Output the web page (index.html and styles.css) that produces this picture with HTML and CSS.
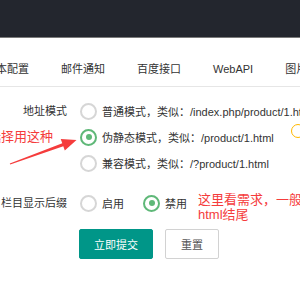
FILE: index.html
```html
<html>
<head>
	<title>系统配置</title>
	<link rel="stylesheet" href="styles.css">
</head>
<body>
	<div class="topbar"></div>
	<div class="tabs">
		<span class="tab">基本配置</span>
		<span class="tab">邮件通知</span>
		<span class="tab">百度接口</span>
		<span class="tab">WebAPI</span>
		<span class="tab">图片设置</span>
	</div>
	<form class="form">
		<div class="item">
			<label class="label">地址模式</label>
			<div class="options">
				<div class="radio"><i class="ring"></i><span>普通模式，类似：/index.php/product/1.html</span></div>
				<div class="radio checked"><i class="ring"></i><span>伪静态模式，类似：/product/1.html</span></div>
				<div class="radio"><i class="ring"></i><span>兼容模式，类似：/?product/1.html</span></div>
			</div>
		</div>
		<div class="item suffix">
			<label class="label">栏目显示后缀</label>
			<div class="options inline">
				<div class="radio"><i class="ring"></i><span>启用</span></div>
				<div class="radio checked"><i class="ring"></i><span>禁用</span></div>
			</div>
		</div>
		<div class="buttons">
			<button type="button" class="btn">立即提交</button>
			<button type="reset" class="btn btn-primary">重置</button>
		</div>
	</form>

	<div class="note note-left">选择用这种</div>
	<div class="note note-right">这里看需求，一般<br>html结尾</div>
	<svg class="arrow" width="90" height="40" viewBox="0 130 90 40">
		<polygon points="10.2,164.6 63.3,146.3 64.8,150.6 76.5,140 60.7,139 62.3,143.3 9.8,163.4" fill="#f53c3c"/>
	</svg>
	<i class="tip"></i>
</body>
</html>
```

FILE: styles.css
```css
body {
	margin: 0;
	overflow: hidden;
	background-color: white;
	font-family: "Liberation Sans", "Noto Sans CJK SC", sans-serif;
	font-size: 11px;
	color: #333;
}

.topbar {
	height: 37px;
	background-color: #23262e;
	border-bottom: 1px solid #7a7a7a;
}

.tabs {
	display: flex;
	margin-top: 14px;
	margin-left: -31px;
	height: 34px;
	border-bottom: 1px solid #e6e6e6;
	white-space: nowrap;
}

.tab {
	padding: 0 16px;
	line-height: 34px;
	font-size: 11px;
	color: #333;
}

.form {
	margin: 11px 0 0 0;
}

.item {
	display: flex;
}

.item.suffix {
	margin-top: 14px;
}

.label {
	width: 67px;
	flex-shrink: 0;
	text-align: right;
	line-height: 26px;
	white-space: nowrap;
	margin-right: 13px;
}

.options {
	display: flex;
	flex-direction: column;
}

.options.inline {
	flex-direction: row;
}

.radio {
	display: flex;
	align-items: center;
	height: 26px;
	white-space: nowrap;
}

.options.inline .radio {
	margin-right: 19px;
}

.ring {
	box-sizing: border-box;
	width: 17px;
	height: 17px;
	border: 2px solid #d6d6d6;
	border-radius: 50%;
	margin-right: 5px;
	display: flex;
	align-items: center;
	justify-content: center;
}

.radio.checked .ring {
	border-color: #5fb878;
}

.radio.checked .ring:after {
	content: "";
	width: 6px;
	height: 6px;
	border-radius: 50%;
	background-color: #5fb878;
}

.buttons {
	display: flex;
	gap: 12px;
	margin: 13px 0 0 79px;
}

.btn {
	height: 30px;
	padding: 0 14px;
	border: 1px solid #009688;
	border-radius: 2px;
	background-color: #009688;
	color: white;
	font-family: "Liberation Sans", "Noto Sans CJK SC", sans-serif;
	font-size: 11px;
	cursor: pointer;
}

.btn-primary {
	background-color: white;
	border-color: #d2d2d2;
	color: #555;
	padding: 0 15px;
}

/* screenshot annotations drawn on top */
.note {
	position: absolute;
	color: #f53c3c;
	font-size: 13px;
	line-height: 15px;
	white-space: nowrap;
}

.note-left {
	left: -12px;
	top: 129px;
}

.note-right {
	left: 198px;
	top: 192px;
}

.arrow {
	position: absolute;
	left: 0;
	top: 130px;
}

.tip {
	position: absolute;
	left: 291px;
	top: 124px;
	width: 14px;
	height: 14px;
	box-sizing: border-box;
	border: 1.5px solid #ffb800;
	border-radius: 50%;
}
```
